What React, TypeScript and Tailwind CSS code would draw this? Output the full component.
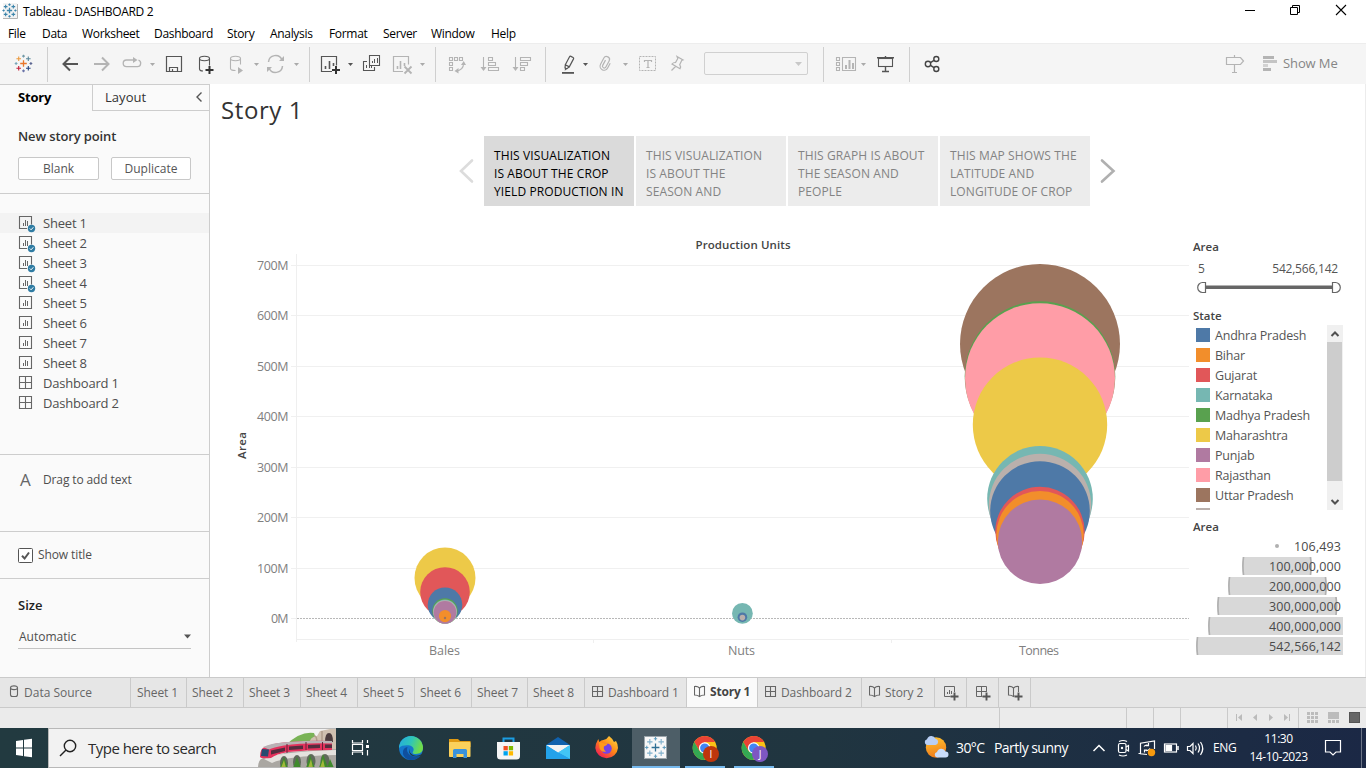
import React from 'react';

type PicProps = { x: number; y: number; w: number; h: number; children?: React.ReactNode };

/* A drawing whose view box starts at (x, y) and is shown at its natural size. */
function Pic({ x, y, w, h, children }: PicProps) {
  return (
    <svg className="block shrink-0" width={w} height={h} viewBox={`${x} ${y} ${w} ${h}`} fill="none">
      {children}
    </svg>
  );
}

function Tool({ x, w, children }: { x: number; w: number; children?: React.ReactNode }) {
  return (
    <Pic x={x} y={43} w={w} h={41}>
      {children}
    </Pic>
  );
}

function Divider() {
  return <div className="mt-[4px] h-[35px] w-px shrink-0 bg-[#cfcfcf]" />;
}

const DARK = '#555555';
const PALE = '#b4b4b4';

function Caret({ x, c }: { x: number; c: string }) {
  return <path d={`M${x - 2.5} 63h5l-2.5 3z`} fill={c} />;
}

const plus = (cx: number, cy: number, r: number) => `M${cx - r} ${cy}h${2 * r}M${cx} ${cy - r}v${2 * r}`;

function TableauMark({ cx, cy, s, colors }: { cx: number; cy: number; s: number; colors?: string[] }) {
  const c = colors ?? Array(9).fill('#3d85ab');
  const d = 4.8 * s;
  const o = 7.4 * s;
  return (
    <g strokeWidth={1.1}>
      <path d={plus(cx, cy, 3.3 * s)} stroke={c[0]} strokeWidth={1.3} />
      <path d={plus(cx - d, cy - d, 2.3 * s)} stroke={c[1]} />
      <path d={plus(cx + d, cy - d, 2.3 * s)} stroke={c[2]} />
      <path d={plus(cx - d, cy + d, 2.3 * s)} stroke={c[3]} />
      <path d={plus(cx + d, cy + d, 2.3 * s)} stroke={c[4]} />
      <path d={plus(cx, cy - o, 1.4 * s)} stroke={c[5]} />
      <path d={plus(cx, cy + o, 1.4 * s)} stroke={c[6]} />
      <path d={plus(cx - o, cy, 1.4 * s)} stroke={c[7]} />
      <path d={plus(cx + o, cy, 1.4 * s)} stroke={c[8]} />
    </g>
  );
}

function TitleBar() {
  return (
    <div className="flex h-[23px] items-start bg-white">
      <Pic x={0} y={0} w={23} h={23}>
        <path d="M3 18.500h14.500V4" stroke="#b4b4b4" />
        <rect x="3" y="3" width="14" height="15" fill="#f3f3f3" />
        <TableauMark cx={9.5} cy={10.5} s={0.8} />
      </Pic>
      <div className="w-[150px] text-[12px] leading-[23px] tracking-[-0.32px] whitespace-nowrap text-black">
        Tableau - DASHBOARD 2
      </div>
      <div className="flex-1" />
      <Pic x={1226} y={0} w={140} h={23}>
        <path d="M1245 10.5h10" stroke="#000" />
        <path d="M1290.500 7.500h7v7h-7zM1292.500 7.500v-2h7v7h-2" stroke="#000" />
        <path d="M1336 5l10 10M1346 5l-10 10" stroke="#000" strokeWidth="1.1" />
      </Pic>
    </div>
  );
}

function MenuBar() {
  return (
    <div className="flex h-[20px] bg-white pl-[8px] text-[12px] leading-[22px] tracking-[-0.32px] whitespace-nowrap text-black">
      <div className="w-[34px]">File</div>
      <div className="w-[40px]">Data</div>
      <div className="w-[72px]">Worksheet</div>
      <div className="w-[73px]">Dashboard</div>
      <div className="w-[43px]">Story</div>
      <div className="w-[59px]">Analysis</div>
      <div className="w-[54px]">Format</div>
      <div className="w-[48px]">Server</div>
      <div className="w-[60px]">Window</div>
      <div>Help</div>
    </div>
  );
}

function Toolbar() {
  return (
    <div className="flex h-[41px] shrink-0 bg-[#f5f5f5] shadow-[inset_0_1px_0_#ededed]">
      <Tool x={0} w={47}>
        <TableauMark
          cx={23.5}
          cy={63.5}
          s={1}
          colors={['#e8762b', '#eb9a3f', '#59879b', '#c4203a', '#24437f', '#7199a6', '#6a73a8', '#7aa6b8', '#5c6692']}
        />
      </Tool>
      <Divider />
      <Tool x={48} w={38}>
        <path d="M78 64H63.500M70 57.500L63.500 64l6.500 6.500" stroke={DARK} strokeWidth="2" />
      </Tool>
      <Tool x={86} w={30}>
        <path d="M94 64h14.500M102 57.500l6.500 6.500l-6.500 6.500" stroke={PALE} strokeWidth="2" />
      </Tool>
      <Tool x={116} w={42}>
        <path d="M134 60h-7.500a3.300 3.300 0 0 0 0 6.600h11a3.300 3.300 0 0 0 1-6.400" stroke={PALE} strokeWidth="1.3" />
        <path d="M133 57l4.500 3l-4.500 3z" fill={PALE} />
        <Caret x={152.500} c="#aaa" />
      </Tool>
      <Tool x={158} w={32}>
        <path d="M166.500 56.500h15v15h-15zM169.500 71.500v-4h8v4M172.500 69v2.500" stroke={DARK} strokeWidth="1.2" />
      </Tool>
      <Tool x={190} w={34}>
        <path
          d="M199.500 58.500c0-3 10-3 10 0s-10 3-10 0v10.500q0 2 3.500 2M209.500 58.500v7"
          stroke={DARK}
          strokeWidth="1.1"
        />
        <path d="M209.500 66v8M205.500 70h8" stroke="#333" strokeWidth="2" />
      </Tool>
      <Tool x={224} w={37}>
        <path d="M230.500 58.500c0-3 10-3 10 0s-10 3-10 0v10q0 2 5 2M240.500 58.500v6" stroke={PALE} strokeWidth="1.1" />
        <path d="M238 67l5 3.500l-5 3.500z" fill={PALE} />
        <Caret x={256.500} c="#aaa" />
      </Tool>
      <Tool x={261} w={48}>
        <path d="M268.500 62a7 7 0 0 1 13.500-2M282.500 66a7 7 0 0 1-13.500 2" stroke={PALE} strokeWidth="1.5" />
        <path d="M279 61h5v-5zM272 67h-5v5z" fill={PALE} />
        <Caret x={296.500} c="#aaa" />
      </Tool>
      <Divider />
      <Tool x={310} w={46}>
        <path d="M332 71.500h-10.500v-15h15v9" stroke={DARK} strokeWidth="1.2" />
        <path d="M325.500 69v-3M329.500 69v-8M333.500 66v-3" stroke={DARK} strokeWidth="1.6" />
        <path d="M336 66v8M332 70h8" stroke="#333" strokeWidth="2" />
        <Caret x={350.500} c={DARK} />
      </Tool>
      <Tool x={356} w={32}>
        <path d="M369.500 55.500h10v10h-10zM367 61.500h-3.500v9h11v-3.500" stroke={DARK} strokeWidth="1.1" />
        <path d="M372.500 63v-2M374.500 63v-4M377.500 63v-5M366.500 68v-3M369.500 68v-2M371.500 68v-2" stroke={DARK} />
      </Tool>
      <Tool x={388} w={47}>
        <path d="M403 71.500h-9.500v-15h15v8" stroke={PALE} strokeWidth="1.2" />
        <path d="M397.500 69v-3M400.500 69v-8M404.500 66v-3" stroke={PALE} strokeWidth="1.6" />
        <path d="M404.500 66.500l7 7M411.500 66.500l-7 7" stroke={PALE} strokeWidth="1.8" />
        <Caret x={422.500} c="#aaa" />
      </Tool>
      <Divider />
      <Tool x={436} w={38}>
        <path
          d="M449.500 57.500h3v3h-3zM454.500 57.500h3v3h-3zM459.500 57.500h3v3h-3zM449.500 62.500h3v3h-3zM449.500 67.500h3v3h-3zM463.500 64q0 6-7.500 7"
          stroke={PALE}
          strokeWidth="1.1"
        />
        <path d="M461 65l2.700-4l2.300 4zM458.500 68v5.500l-4-2.500z" fill={PALE} />
      </Tool>
      <Tool x={474} w={34}>
        <path
          d="M483.500 57v12M488.500 57.500h4v3h-4zM488.500 62.500h7v3h-7zM488.500 67.500h10v3h-10z"
          stroke={PALE}
          strokeWidth="1.1"
        />
        <path d="M480.500 67h6l-3 4z" fill={PALE} />
      </Tool>
      <Tool x={508} w={37}>
        <path
          d="M515.500 57v12M520.500 57.500h10v3h-10zM520.500 62.500h7v3h-7zM520.500 67.500h4v3h-4z"
          stroke={PALE}
          strokeWidth="1.1"
        />
        <path d="M512.500 67h6l-3 4z" fill={PALE} />
      </Tool>
      <Divider />
      <Tool x={546} w={48}>
        <g transform="rotate(28 568.5 63)">
          <path d="M566.500 57q0-1 1-1h2.500q1 0 1 1v9h-4.500zM566.500 66l1.200 3h2l1.300-3" stroke={DARK} strokeWidth="1.200" />
          <path d="M567.500 68.500h2.500l-1.200 3z" fill={DARK} />
        </g>
        <path d="M562 72h12v1.800h-12z" fill={DARK} />
        <Caret x={585.500} c={DARK} />
      </Tool>
      <Tool x={594} w={40}>
        <path
          d="M609.500 61v5.500a4 4 0 0 1-8 0v-7a3 3 0 0 1 6 0v7a1.800 1.800 0 0 1-3.600 0v-6"
          transform="rotate(28 605.5 63.5)"
          stroke={PALE}
          strokeWidth="1.2"
        />
        <Caret x={625.500} c="#aaa" />
      </Tool>
      <Tool x={634} w={30}>
        <rect x="639.500" y="56.500" width="16" height="14" stroke={PALE} strokeDasharray="2 1" />
        <path d="M644.500 62v-1.500h7v1.500M648 60.500v7M646.500 67.500h3" stroke={PALE} strokeWidth="1.2" />
      </Tool>
      <Tool x={664} w={40}>
        <path
          d="M677 56.500l6 3.500l-1.300.5l-2 4.200q1.500 2 .3 4l-8-4.700q1.300-1.700 3.500-1.500l2.300-4zM675.500 66.500l-4 4"
          stroke={PALE}
          strokeWidth="1.2"
        />
      </Tool>
      <div className="mt-[9px] flex h-[23px] w-[104px] shrink-0 rounded-[2px] border border-[#d0d0d0]">
        <svg className="mt-[9px] ml-[90px]" width="7" height="5" viewBox="0 0 7 5">
          <path d="M0 0h7l-3.500 4z" fill="#c8c8c8" />
        </svg>
      </div>
      <div className="w-[15px]" />
      <Divider />
      <Tool x={824} w={44}>
        <path
          d="M836.500 57.500h3v3h-3zM836.500 62.500h3v3h-3zM836.500 67.500h3v3h-3zM842.500 57.500h13v13h-13z"
          stroke={PALE}
          strokeWidth="1.1"
        />
        <path d="M846 69v-4M849.500 69v-9M853 69v-6" stroke={PALE} strokeWidth="2" />
        <Caret x={863.500} c="#aaa" />
      </Tool>
      <Tool x={868} w={41}>
        <path d="M877 57.800h17M885.500 56v1M885.500 66v5M882 71.500h7" stroke={DARK} strokeWidth="1.400" />
        <rect x="878.500" y="58.500" width="14" height="8" stroke={DARK} strokeWidth="1.1" />
      </Tool>
      <Divider />
      <Tool x={910} w={40}>
        <g stroke="#444" strokeWidth="1.4">
          <circle cx="928" cy="64" r="2.700" />
          <circle cx="936.300" cy="59" r="2.500" />
          <circle cx="936.300" cy="69" r="2.500" />
          <path d="M930.500 62.700l3.500-2.300M930.500 65.300l3.500 2.300" />
        </g>
      </Tool>
      <div className="flex-1" />
      <Tool x={1220} w={63}>
        <path d="M1226.500 57.500h14l3 3.500l-3 3.500h-14zM1234.500 55v2.500M1234.500 64.500v7.500M1232 72.500h5" stroke={PALE} strokeWidth="1.2" />
        <path d="M1263 56h11v3h-11zM1263 68h8v3h-8z" fill="#b4b4b4" />
        <path d="M1263 60h14v3h-14z" fill="#c4c4c4" />
        <path d="M1263 64h5v3h-5z" fill="#d2d2d2" />
      </Tool>
      <div className="w-[83px] text-[13px] leading-[40px] tracking-[-0.1px] whitespace-nowrap text-[#858585]">Show Me</div>
    </div>
  );
}

function SheetIcon({ used }: { used?: boolean }) {
  return (
    <svg className="block shrink-0" width="43" height="20" viewBox="0 0 43 20" fill="none">
      <path d={used ? 'M27 15.500h-7.500v-12h12v8' : 'M19.500 3.500h12v12h-12z'} stroke="#666" strokeWidth="1.1" />
      <path d="M23.500 13v-3M25.500 13v-6M27.500 13v-5" stroke="#666" />
      {used && (
        <g>
          <circle cx="31.500" cy="15.500" r="3.700" fill="#2f7ca3" />
          <path d="M29.800 15.500l1.300 1.300l2.200-2.500" stroke="#fff" />
        </g>
      )}
    </svg>
  );
}

function DashIcon() {
  return (
    <svg className="block shrink-0" width="43" height="20" viewBox="0 0 43 20" fill="none">
      <path d="M19.500 3.500h12v12h-12zM25.500 3.500v12M19.500 9.500h12" stroke="#666" strokeWidth="1.1" />
    </svg>
  );
}

const sheets = ['Sheet 1', 'Sheet 2', 'Sheet 3', 'Sheet 4', 'Sheet 5', 'Sheet 6', 'Sheet 7', 'Sheet 8'];

function SidePanel() {
  return (
    <div className="flex w-[210px] shrink-0 flex-col border-r border-[#cdcdcd] bg-[#fafafa] text-[#4e4e4e]">
      <div className="flex h-[27px] shrink-0 border-t border-[#cdcdcd]">
        <div className="w-[92px] pl-[18px] text-[13px] leading-[24px] font-bold tracking-[-0.2px] text-black">Story</div>
        <div className="flex flex-1 border-b border-l border-[#cdcdcd] pl-[12px] text-[13px] leading-[25px] text-[#333]">
          <div className="w-[89px] tracking-[0.05px]">Layout</div>
          <svg className="mt-[6px]" width="10" height="12" viewBox="0 0 10 12" fill="none">
            <path d="M7.500 1.500l-4.500 4.500l4.500 4.500" stroke="#555" strokeWidth="1.4" />
          </svg>
        </div>
      </div>
      <div className="h-[83px] shrink-0 border-b border-[#cdcdcd] pl-[18px]">
        <div className="mt-[15px] text-[13px] leading-[20px] font-semibold tracking-[-0.12px] text-[#333]">New story point</div>
        <div className="mt-[11px] flex gap-[12px] text-center text-[12px] leading-[21px] text-[#555]">
          <div className="h-[23px] w-[81px] rounded-[2px] border border-[#c8c8c8] bg-white">Blank</div>
          <div className="h-[23px] w-[80px] rounded-[2px] border border-[#c8c8c8] bg-white">Duplicate</div>
        </div>
      </div>
      <div className="h-[261px] shrink-0 border-b border-[#cdcdcd] pt-[19px] text-[13px] leading-[20px] tracking-[-0.2px]">
        {sheets.map((s, i) => (
          <div key={s} className={i === 0 ? 'flex h-[20px] bg-[#f3f3f3]' : 'flex h-[20px]'}>
            <SheetIcon used={i < 4} />
            {s}
          </div>
        ))}
        <div className="flex h-[20px]">
          <DashIcon />
          Dashboard 1
        </div>
        <div className="flex h-[20px]">
          <DashIcon />
          Dashboard 2
        </div>
      </div>
      <div className="flex h-[77px] shrink-0 border-b border-[#cdcdcd] pt-[15px] text-[12px] leading-[20px] tracking-[-0.12px]">
        <div className="w-[43px] pl-[20px] text-[17px] text-[#666]">A</div>
        Drag to add text
      </div>
      <div className="flex h-[47px] shrink-0 items-center border-b border-[#cdcdcd] pl-[18px] text-[12px] tracking-[-0.1px]">
        <svg className="mr-[5px]" width="15" height="15" viewBox="0 0 15 15" fill="none">
          <rect x=".5" y=".5" width="14" height="14" rx="1" fill="#fff" stroke="#555" />
          <path d="M4 7.800l2.600 2.700l4.400-6" stroke="#555" strokeWidth="2" />
        </svg>
        Show title
      </div>
      <div className="pl-[18px]">
        <div className="mt-[16px] text-[13px] leading-[20px] font-semibold text-[#222]">Size</div>
        <div className="mt-[10px] flex h-[24px] w-[173px] items-center border-b border-[#c4c4c4] pl-[1px] text-[12px]">
          <div className="w-[165px]">Automatic</div>
          <svg width="7" height="5" viewBox="0 0 7 5">
            <path d="M0 .5h7l-3.500 4z" fill="#555" />
          </svg>
        </div>
      </div>
    </div>
  );
}

const points = [
  ['THIS VISUALIZATION', 'IS ABOUT THE CROP', 'YIELD PRODUCTION IN'],
  ['THIS VISUALIZATION', 'IS ABOUT THE', 'SEASON AND'],
  ['THIS GRAPH IS ABOUT', 'THE SEASON AND', 'PEOPLE'],
  ['THIS MAP SHOWS THE', 'LATITUDE AND', 'LONGITUDE OF CROP'],
];

function Navigator() {
  return (
    <div className="mt-[10px] flex h-[70px] shrink-0 items-center">
      <div className="w-[248px]" />
      <svg className="mr-[10px]" width="16" height="26" viewBox="0 0 16 26" fill="none">
        <path d="M14 2.500L3 13l11 10.500" stroke="#dcdcdc" strokeWidth="2.600" strokeLinecap="round" />
      </svg>
      <div className="flex gap-[2px] leading-[18px] whitespace-nowrap">
        {points.map((p, i) => (
          <div
            key={i}
            className={
              i === 0
                ? 'h-[70px] w-[150px] bg-[#dadada] pt-[11px] pl-[10px] text-[12px] text-black tracking-[0.1px]'
                : 'h-[70px] w-[150px] bg-[#ececec] pt-[11px] pl-[10px] text-[12px] text-[#838383] tracking-[0.1px]'
            }
          >
            {p.map((l) => (
              <div key={l}>{l}</div>
            ))}
          </div>
        ))}
      </div>
      <svg className="ml-[9px]" width="18" height="26" viewBox="0 0 18 26" fill="none">
        <path d="M3 2.500l11.500 10.500L3 23.500" stroke="#b0b0b0" strokeWidth="2.600" strokeLinecap="round" />
      </svg>
    </div>
  );
}

const axis: [number, string][] = [
  [265.5, '700M'],
  [315.5, '600M'],
  [366.5, '500M'],
  [416.5, '400M'],
  [467.5, '300M'],
  [517.5, '200M'],
  [568.5, '100M'],
];

const marks: [number, number, number, string][] = [
  [1040, 344, 80, '#9c755f'],
  [1040, 376.6, 75.3, '#59a14f'],
  [1040, 378.3, 75, '#ff9da7'],
  [1040, 424.7, 67.2, '#edc948'],
  [1040, 498.8, 52.8, '#76b7b2'],
  [1040, 505, 51.2, '#bab0ac'],
  [1040, 511, 49.8, '#4e79a7'],
  [1040, 531.5, 44.7, '#e15759'],
  [1040, 534.6, 43.7, '#f28e2b'],
  [1040, 541.7, 42.2, '#b07aa1'],
  [445, 578, 30.5, '#edc948'],
  [445, 592, 24.8, '#e15759'],
  [445, 604.8, 17.3, '#4e79a7'],
  [445, 611, 12.7, '#59a14f'],
  [445, 611.5, 12, '#76b7b2'],
  [445, 612, 11.8, '#bab0ac'],
  [445, 612.4, 11.3, '#b07aa1'],
  [445, 616.1, 6.1, '#f28e2b'],
  [445, 618, 1.2, '#9c755f'],
  [742.4, 613.4, 10.4, '#76b7b2'],
  [742.4, 617.2, 4.8, '#4e79a7'],
  [742.4, 617.6, 2.8, '#bab0ac'],
];

function Chart() {
  return (
    <Pic x={210} y={230} w={980} h={440}>
      <text x="695.500" y="249" fontSize="11.500" fontWeight="600" fill="#444" textLength="95">
        Production Units
      </text>
      <g fontSize="12.5" fill="#808080" fontWeight="400">
        {axis.map(([y, t]) => (
          <g key={t}>
            <path d={`M291 ${y}H1189`} stroke="#f0f0f0" />
            <text x="257" y={y + 4.5} textLength="31.500">
              {t}
            </text>
          </g>
        ))}
        <text x="271" y="623" textLength="17.500">
          0M
        </text>
        <text x="429" y="655" textLength="31">
          Bales
        </text>
        <text x="728" y="655" textLength="27">
          Nuts
        </text>
        <text x="1019" y="655" textLength="40">
          Tonnes
        </text>
      </g>
      <path d="M296.500 254V642M296 639.500H1189M593.500 640v3M891.500 640v3M291 618.500h5" stroke="#efefef" />
      <path d="M297 618.500H1189" stroke="#b8b8b8" strokeDasharray="2 1" />
      <text x="0" y="0" transform="translate(246 459) rotate(-90)" fontSize="11.5" fontWeight="600" fill="#444" textLength="27">
        Area
      </text>
      {marks.map(([cx, cy, r, c], i) => (
        <circle key={i} cx={cx} cy={cy} r={r} fill={c} />
      ))}
    </Pic>
  );
}

const states: [string, string][] = [
  ['Andhra Pradesh', 'bg-[#4e79a7]'],
  ['Bihar', 'bg-[#f28e2b]'],
  ['Gujarat', 'bg-[#e15759]'],
  ['Karnataka', 'bg-[#76b7b2]'],
  ['Madhya Pradesh', 'bg-[#59a14f]'],
  ['Maharashtra', 'bg-[#edc948]'],
  ['Punjab', 'bg-[#b07aa1]'],
  ['Rajasthan', 'bg-[#ff9da7]'],
  ['Uttar Pradesh', 'bg-[#9c755f]'],
  ['', 'bg-[#bab0ac]'],
];

const sizes: [string, number, number][] = [
  ['100,000,000', 1242, 1312],
  ['200,000,000', 1228, 1327],
  ['300,000,000', 1217, 1337.5],
  ['400,000,000', 1208, 1350],
  ['542,566,142', 1196, 1356],
];

function Legends() {
  return (
    <div className="w-[175px] pl-[3px] text-[12px] whitespace-nowrap text-[#555]">
      <div className="mt-[7px] h-[20px] text-[11.5px] leading-[20px] font-semibold text-[#444]">Area</div>
      <div className="mt-[2px] flex h-[20px] w-[145px] justify-between pl-[5px] leading-[20px]">
        <div>5</div>
        <div className="tracking-[-0.2px]">542,566,142</div>
      </div>
      <Pic x={1193} y={279} w={150} h={26}>
        <path d="M1205 287.200h128" stroke="#666" strokeWidth="3.600" />
        <path d="M1205.500 282.500h-3a4.700 4.900 0 0 0 0 10h3zM1332.500 282.500h3a4.700 4.900 0 0 1 0 10h-3z" fill="#fff" stroke="#666" strokeWidth="1.2" />
      </Pic>
      <div className="h-[20px] text-[11.5px] leading-[22px] font-semibold text-[#444]">State</div>
      <div className="flex h-[185px]">
        <div className="h-[185px] w-[134px] overflow-hidden pl-[3px] text-[12.5px] tracking-[-0.2px]">
          {states.map(([s, c]) => (
            <div key={c} className="flex h-[20px] pt-[3px] leading-[16px]">
              <div className={`mr-[5px] h-[14px] w-[14px] ${c}`} />
              {s}
            </div>
          ))}
        </div>
        <div className="flex h-[185px] w-[16px] flex-col bg-[#f0f0f0]">
          <svg width="16" height="17" viewBox="0 0 16 17" fill="none">
            <path d="M4.500 11l3.500-3.500l3.500 3.500" stroke="#505050" strokeWidth="2" />
          </svg>
          <div className="h-[139px] w-[15px] bg-[#cdcdcd]" />
          <div className="flex-1" />
          <svg width="16" height="17" viewBox="0 0 16 17" fill="none">
            <path d="M4.500 7l3.500 3.500l3.500-3.500" stroke="#505050" strokeWidth="2" />
          </svg>
        </div>
      </div>
      <div className="mt-[7px] h-[20px] text-[11.5px] leading-[20px] font-semibold text-[#444]">Area</div>
      <Pic x={1193} y={537} w={150} h={120}>
        <circle cx="1277" cy="546" r="2" fill="#b0b0b0" />
        <text x="1294" y="551" textLength="47" fontSize="12.500" fill="#4a4a4a">
          106,493
        </text>
        {sizes.map(([t, l, r], i) => (
          <g key={t}>
            <path
              d={`M${l + 1.5} ${557 + 20 * i}q-1.200 9 0 18H${r - 1.5}q1.200 -9 0 -18z`}
              fill="#d8d8d8"
            />
            <path
              d={`M${l + 1.5} ${557 + 20 * i}q-1.200 9 0 18M${r - 1.5} ${557 + 20 * i}q1.200 9 0 18`}
              stroke="#b0b0b0"
              strokeWidth="1.700"
            />
            <text x="1269" y={571 + 20 * i} textLength="72" fontSize="12.500" fill="#4a4a4a">
              {t}
            </text>
          </g>
        ))}
      </Pic>
    </div>
  );
}

function StoryGlyph({ c = '#666' }: { c?: string }) {
  return <path d="M.5 1.500q3-.5 5 1.500q2-2 5-1.500v8.500q-3 0-5 1.500q-2-1.500-5-1.500zM5.500 3v8.500" stroke={c} strokeWidth="1.100" />;
}

function GridGlyph() {
  return <path d="M.5 1.500h10v10h-10zM5.500 1.500v10M.5 6.500h10" stroke="#666" strokeWidth="1.100" />;
}

function TabIcon({ children }: { children: React.ReactNode }) {
  return (
    <svg className="mt-[7px] mr-[4px] block shrink-0" width="12" height="13" viewBox="0 0 12 13" fill="none">
      {children}
    </svg>
  );
}

function AddTab({ children }: { children: React.ReactNode }) {
  return (
    <div className="w-[32px] border-r border-[#cacaca] pt-[7px] pl-[8px]">
      <svg width="18" height="17" viewBox="0 0 18 17" fill="none">
        {children}
        <path d="M11.500 7v8M7.500 11.500h8" stroke="#e6e6e6" strokeWidth="4" />
        <path d="M11.500 7.500v8M7.500 11.500h8" stroke="#555" strokeWidth="1.900" />
      </svg>
    </div>
  );
}

function TabStrip() {
  return (
    <div className="flex h-[31px] shrink-0 border-t border-b border-[#cacaca] bg-[#e6e6e6] text-[12px] leading-[30px] tracking-[-0.1px] whitespace-nowrap text-[#666]">
      <div className="flex w-[131px] border-r border-[#cacaca] pl-[9px] tracking-normal">
        <svg className="mt-[7px] mr-[5px]" width="10" height="13" viewBox="0 0 10 13" fill="none">
          <path d="M1.500 2.800c0-2.600 7-2.600 7 0s-7 2.300-7 0v6.700q0 2 2 2h3q2 0 2-2v-6.700" stroke="#666" strokeWidth="1.100" />
        </svg>
        Data Source
      </div>
      <div className="w-[56px] border-r border-[#cacaca] pl-[6px]">Sheet 1</div>
      <div className="w-[57px] border-r border-[#cacaca] pl-[5px]">Sheet 2</div>
      <div className="w-[57px] border-r border-[#cacaca] pl-[5px]">Sheet 3</div>
      <div className="w-[57px] border-r border-[#cacaca] pl-[5px]">Sheet 4</div>
      <div className="w-[57px] border-r border-[#cacaca] pl-[5px]">Sheet 5</div>
      <div className="w-[57px] border-r border-[#cacaca] pl-[5px]">Sheet 6</div>
      <div className="w-[56px] border-r border-[#cacaca] pl-[5px]">Sheet 7</div>
      <div className="w-[57px] border-r border-[#cacaca] pl-[5px]">Sheet 8</div>
      <div className="flex w-[102px] border-r border-[#cacaca] pl-[7px]">
        <TabIcon>
          <GridGlyph />
        </TabIcon>
        Dashboard 1
      </div>
      <div className="flex w-[71px] border-r border-[#cacaca] bg-[#fafafa] pl-[7px] leading-[27px] font-bold tracking-[-0.2px] text-[#444]">
        <TabIcon>
          <StoryGlyph />
        </TabIcon>
        Story 1
      </div>
      <div className="flex w-[104px] border-r border-[#cacaca] pl-[7px]">
        <TabIcon>
          <GridGlyph />
        </TabIcon>
        Dashboard 2
      </div>
      <div className="flex w-[73px] border-r border-[#cacaca] pl-[7px]">
        <TabIcon>
          <StoryGlyph />
        </TabIcon>
        Story 2
      </div>
      <AddTab>
        <path d="M1.500 1.500h10v10h-10zM4.500 9v-2M6.500 9v-4M8.500 9v-3" stroke="#666" />
      </AddTab>
      <AddTab>
        <path d="M1.500 1.500h10v10h-10zM6.500 1.500v10M1.500 6.500h10" stroke="#666" />
      </AddTab>
      <AddTab>
        <g transform="translate(1 0)">
          <StoryGlyph />
        </g>
      </AddTab>
    </div>
  );
}

function StatusBar() {
  return (
    <div className="flex h-[20px] shrink-0 bg-[#ebebeb]">
      <div className="w-[1000px] border-r border-[#cacaca]" />
      <div className="w-[127px] border-r border-[#cacaca]" />
      <div className="w-[27px] border-r border-[#cacaca]" />
      <div className="w-[27px] border-r border-[#cacaca]" />
      <div className="w-[47px] border-r border-[#cacaca]" />
      <div className="w-[71px] border-r border-[#cacaca]">
        <Pic x={1228} y={708} w={70} h={19}>
          <path d="M1236 714h1v7h-1zM1242 714v7l-4-3.500zM1257 714v7l-4-3.500zM1269 714v7l4-3.500zM1284 714v7l4-3.500zM1289 714h1v7h-1z" fill="#bbb" />
        </Pic>
      </div>
      <Pic x={1299} y={708} w={67} h={20}>
        <path
          d="M1307 712h3v3h-3zM1311 712h3v3h-3zM1315 712h3v3h-3zM1307 716h3v3h-3zM1311 716h3v3h-3zM1315 716h3v3h-3zM1307 720h3v3h-3zM1311 720h3v3h-3zM1315 720h3v3h-3zM1328 712h11v7h-11zM1328 720h3v3h-3zM1332 720h3v3h-3zM1336 720h3v3h-3z"
          fill="#bcbcbc"
        />
        <rect x="1349.500" y="712.500" width="10" height="10" fill="#666" stroke="#555" />
      </Pic>
    </div>
  );
}

function Chrome({ x, letter, color }: { x: number; letter: string; color: string }) {
  const cx = x - 0.3;
  return (
    <g>
      <circle cx={cx} cy="748" r="12" fill="#fbc116" />
      <path d={`M${cx - 10.4} 742a12 12 0 0 1 20.800 0l-10.400 0l-5.200 9z`} fill="#ea4335" />
      <path d={`M${cx - 10.4} 742l5.200 9l5.200 3l0 6a12 12 0 0 1-10.400-18z`} fill="#34a853" />
      <circle cx={cx} cy="748" r="5.800" fill="#fff" />
      <circle cx={cx} cy="748" r="4.600" fill="#4285f4" />
      <circle cx={x + 6} cy="754" r="8" fill={color} />
      <text x={x + 6} y="757.500" textAnchor="middle" fontSize="10" fill="#fff">
        {letter}
      </text>
    </g>
  );
}

function Monorail() {
  return (
    <Pic x={256} y={729} w={80} h={38}>
      <path d="M286 745q14-14 28-12l4 10z" fill="#79b356" />
      <path d="M308 746q2-10 9-10l3-5l10-2h6v38h-28z" fill="#cfc0b0" />
      <path d="M314 736q3-1 3 8M322 731v12" stroke="#b09c8b" strokeWidth="1.500" />
      <path d="M325 742q0-9 4-9t4 9z" fill="#4b3c3e" />
      <path d="M258 768q0-12 10-10l20-6l48-3v19z" fill="#aaa7a2" />
      <path d="M264 759q12-7 72-9v5q-50 1-64 8z" fill="#e4e2de" />
      <g fill="#5f6a5b">
        <ellipse cx="284" cy="763" rx="4" ry="7" />
        <ellipse cx="297" cy="762" rx="4" ry="7" />
        <ellipse cx="311" cy="761" rx="4.500" ry="7" />
        <ellipse cx="325" cy="761" rx="4.500" ry="7" />
      </g>
      <path d="M280 768l4-11l4 11zM293 768l4-11l4 11zM306 768l4-13l5 13zM319 768l4-14l5 14zM327 768l3-9l4 9z" fill="#3f8a2c" />
      <path d="M281 768l3-8l2 8zM308 768l3-9l2 9zM320 768l3-9l2 9z" fill="#a0b83a" />
      <path d="M260 757q0-9 5-10q8-4 24-5q25-2 43-1v9q-26 0-44 2q-12 2-17 6q-10 1-11-1z" fill="#e3325c" />
      <path d="M263 747q8-4 25-5q25-2 44-1v2.500q-28-1-48 2q-11 2-15 4z" fill="#b9b2b5" />
      <path d="M271 750.500l14-3v3.500l-14 3.500zM289 746.500l14-1v3.500l-14 1zM308 745l12-.5v3.500l-12 .5zM325 744.500h7v3.500h-7z" fill="#542d3f" />
      <path d="M262 749l7 .5l-1 7l-7-.5z" fill="#274a70" />
      <path d="M287 744v9M306 742v8M322.500 742v8" stroke="#6b2038" />
    </Pic>
  );
}

function Taskbar() {
  return (
    <div className="flex h-[40px] shrink-0 bg-gradient-to-r from-[#223a40] via-[#203540] via-60% to-[#1b2845] text-white">
      <Pic x={0} y={728} w={48} h={40}>
        <path d="M16 741l7-1v7.500h-7zM24 739.800l8-1.100v8.800h-8zM16 748.500h7v7.500l-7-1zM24 748.500h8v8.800l-8-1.100z" fill="#fff" />
      </Pic>
      <div className="flex h-[40px] w-[288px] shrink-0 border border-r-0 border-[#b8b8b8] bg-[#f2f2f2]">
        <Pic x={49} y={729} w={39} h={38}>
          <circle cx="70" cy="746" r="5.700" stroke="#222" strokeWidth="1.400" />
          <path d="M66 750l-6 6" stroke="#222" strokeWidth="1.500" />
        </Pic>
        <div className="w-[168px] text-[15px] leading-[38px] tracking-[-0.52px] whitespace-nowrap text-[#2b2b2b]">
          Type here to search
        </div>
        <Monorail />
      </div>
      <Pic x={336} y={728} w={50} h={40}>
        <path d="M352.500 740v3h10v-3M352.500 744.500h10v6h-10zM352.500 755v-3h10v3M367.500 740v3M367.500 750v5.500" stroke="#fff" strokeWidth="1.200" />
        <rect x="366" y="745" width="3" height="3" fill="#fff" />
      </Pic>
      <Pic x={386} y={728} w={50} h={40}>
        <defs>
          <linearGradient id="edgeA" x1="0" y1="0" x2="1" y2="0.3">
            <stop offset="0" stopColor="#25a9e0" />
            <stop offset="0.55" stopColor="#2fc6b8" />
            <stop offset="1" stopColor="#6fdc4c" />
          </linearGradient>
        </defs>
        <circle cx="411" cy="748" r="12" fill="#1577cc" />
        <path d="M399 748a12 12 0 0 1 24 0c0 4.500-4 6.200-8 5.900c-2.500-.2-2.800-1.200-2-2.200c2-3-.5-6.200-4.500-6.500c-4-.2-7.700.3-9.500 2.800z" fill="url(#edgeA)" />
        <path d="M403 751q-1 6 5.500 8.800q8 1 12.500-4.300q-6 2.500-11-.5q-4.500-3.200-2.500-8q-3.500.5-4.500 4z" fill="#0f4f9e" />
        <path d="M409.500 748.500q-.5 4.500 3.500 6.500q4.500 1.800 9-1l-1 1.700q-5 1.600-9 0q-4-2.200-2.500-7.200z" fill="#223a40" />
      </Pic>
      <Pic x={436} y={728} w={48} h={40}>
        <path d="M449 739h9l2 2h10.500v6h-21.500z" fill="#e09a12" />
        <rect x="449" y="742" width="21.500" height="15" rx="0.800" fill="#fbd15b" />
        <path d="M453 758v-7.500q0-1.500 1.500-1.500h11q1.500 0 1.500 1.500v7.500h-3.500v-4h-7v4z" fill="#3a93dc" />
      </Pic>
      <Pic x={484} y={728} w={49} h={40}>
        <path d="M503.500 743v-4.500h10v4.500" stroke="#1b9de2" strokeWidth="2" />
        <path d="M497 742h23v14q0 3.500-3.500 3.500h-16q-3.500 0-3.500-3.500z" fill="#f5f5f5" />
        <path d="M503.500 746h4.300v4.300h-4.300z" fill="#f25022" />
        <path d="M508.800 746h4.300v4.300h-4.300z" fill="#7fba00" />
        <path d="M503.500 751.200h4.300v4.300h-4.300z" fill="#00a4ef" />
        <path d="M508.800 751.200h4.300v4.300h-4.300z" fill="#ffb900" />
      </Pic>
      <Pic x={533} y={728} w={49} h={40}>
        <path d="M546 745l12-8l12 8z" fill="#1061ad" />
        <path d="M546 745h24v14h-24z" fill="#1f8de0" />
        <path d="M546 745h24l-12 8z" fill="#f2f2f2" />
        <path d="M570 745v14l-12-6.500z" fill="#42c5f5" />
        <path d="M546 745v14h24l-12-6.500z" fill="#23a2ea" />
      </Pic>
      <Pic x={582} y={728} w={50} h={40}>
        <defs>
          <linearGradient id="fox" x1="1" y1="0" x2="0.200" y2="1">
            <stop offset="0" stopColor="#ffe44a" />
            <stop offset="0.500" stopColor="#ff8a16" />
            <stop offset="1" stopColor="#f0155a" />
          </linearGradient>
        </defs>
        <path d="M609 736q4 3 5 6l2-1q2 3 2 7a11.400 11.400 0 0 1-22.700 0q0-4 2-7l1-2l1 3q2-2 4-2q4-1 5.700-4z" fill="url(#fox)" />
        <circle cx="606.500" cy="748.500" r="5.200" fill="#7542e5" />
        <path d="M599 742q3 0 5 1.500l4-.5q-1 3-4 3.500q-1 3 2 5q-5 1-6.500-3.500z" fill="#ff9a1a" />
      </Pic>
      <div className="h-[40px] w-[48px] shrink-0 border-b-2 border-[#76b9ed] bg-[#4d5e67]">
        <Pic x={632} y={728} w={48} h={38}>
          <rect x="644.500" y="736.500" width="22" height="22" fill="#f7f7f7" stroke="#9aa5ab" />
          <TableauMark
            cx={655.5}
            cy={747.5}
            s={1.18}
            colors={['#2f6f94', '#7fb0cb', '#7fb0cb', '#7fb0cb', '#7fb0cb', '#5f9dbe', '#5f9dbe', '#5f9dbe', '#5f9dbe']}
          />
        </Pic>
      </div>
      <Pic x={680} y={728} w={50} h={40}>
        <Chrome x={705} letter="I" color="#bf360c" />
        <path d="M685 766h40v2h-40z" fill="#76b9ed" />
      </Pic>
      <Pic x={730} y={728} w={50} h={40}>
        <Chrome x={754} letter="J" color="#7e57c2" />
        <path d="M734 766h40v2h-40z" fill="#76b9ed" />
      </Pic>
      <div className="flex-1" />
      <Pic x={916} y={728} w={40} h={40}>
        <defs>
          <linearGradient id="sun" x1="0.300" y1="0" x2="0.500" y2="1">
            <stop offset="0" stopColor="#ffc12e" />
            <stop offset="1" stopColor="#f07a1a" />
          </linearGradient>
        </defs>
        <circle cx="936" cy="747.500" r="10.200" fill="url(#sun)" />
        <path d="M927 745a3 3 0 0 1 0-5.800a4.500 4.500 0 0 1 8.500-.5a3.200 3.200 0 0 1 0 6.300z" fill="#b9cff5" />
        <path d="M937 757.500a2.800 2.800 0 0 1 0-5.500a4.500 4.500 0 0 1 8.500-.5a3 3 0 0 1 0 6z" fill="#c9dcfa" />
      </Pic>
      <div className="w-[38px] text-[14px] leading-[40px] tracking-[-0.6px] whitespace-nowrap">30°C</div>
      <div className="w-[92px] text-[14px] leading-[40px] tracking-[-0.55px] whitespace-nowrap">Partly sunny</div>
      <Pic x={1086} y={728} w={127} h={40}>
        <g stroke="#fff" strokeWidth="1.200">
          <path d="M1093.500 751l5.500-5.500l5.500 5.500" strokeWidth="1.500" />
          <rect x="1118.500" y="743.500" width="7.500" height="9" rx="1.500" />
          <path d="M1126 747l2.500-1.500v5.500l-2.500-1.500M1119 741.500q4-2 8 0M1119 755q4 2 8 0" />
          <circle cx="1122" cy="748" r="1.200" fill="#fff" stroke="none" />
          <path d="M1147 754.500l-6.500-.7v-10.600l14-2.200v8M1138.500 753.500h2M1144 746.500q1.500-2 4.500-1M1148.500 743v2.700h-2.700M1150 748.500q-1.500 2.700-4.500 2M1144.500 752.500v-2.500h2.500" />
          <rect x="1164.500" y="744" width="12" height="8" />
          <path d="M1178 746v4" strokeWidth="1.500" />
          <path d="M1166 745.500h5.500v5h-5.500z" fill="#fff" />
          <path d="M1187.500 746.500h2.500l3-3v10l-3-3h-2.500zM1195.500 745.500q1.500 2.500 0 5M1198 743.500q3 4.500 0 9M1200.500 742q4.500 6.500 0 13" />
        </g>
        <circle cx="1151.500" cy="752.500" r="3.700" fill="#f79a0e" />
      </Pic>
      <div className="w-[30px] text-[12px] leading-[40px] tracking-[-0.4px]">ENG</div>
      <div className="w-[71px] pt-[2px] text-center text-[12px] leading-[18px] tracking-[-0.45px] whitespace-nowrap">
        <div>11:30</div>
        <div>14-10-2023</div>
      </div>
      <Pic x={1314} y={728} w={52} h={40}>
        <path d="M1325.500 740.500h15v11.500h-4.500l-3 3l-3-3h-4.500z" stroke="#fff" strokeWidth="1.200" />
        <path d="M1361.500 728v40" stroke="#6b7486" />
      </Pic>
    </div>
  );
}

export default function App() {
  return (
    <div className="flex h-[768px] w-[1366px] flex-col overflow-hidden bg-white font-['Open_Sans','Noto_Sans',sans-serif]">
      <TitleBar />
      <MenuBar />
      <Toolbar />
      <div className="flex h-[593px] shrink-0">
        <SidePanel />
        <div className="flex flex-1 flex-col border-r border-[#ececec] bg-white">
          <div className="mt-[10px] h-[32px] pl-[11px] text-[24px] leading-[31px] font-normal tracking-[0.6px] text-[#333]">
            Story 1
          </div>
          <Navigator />
          <div className="mt-[24px] flex">
            <Chart />
            <Legends />
          </div>
        </div>
      </div>
      <TabStrip />
      <StatusBar />
      <Taskbar />
    </div>
  );
}
